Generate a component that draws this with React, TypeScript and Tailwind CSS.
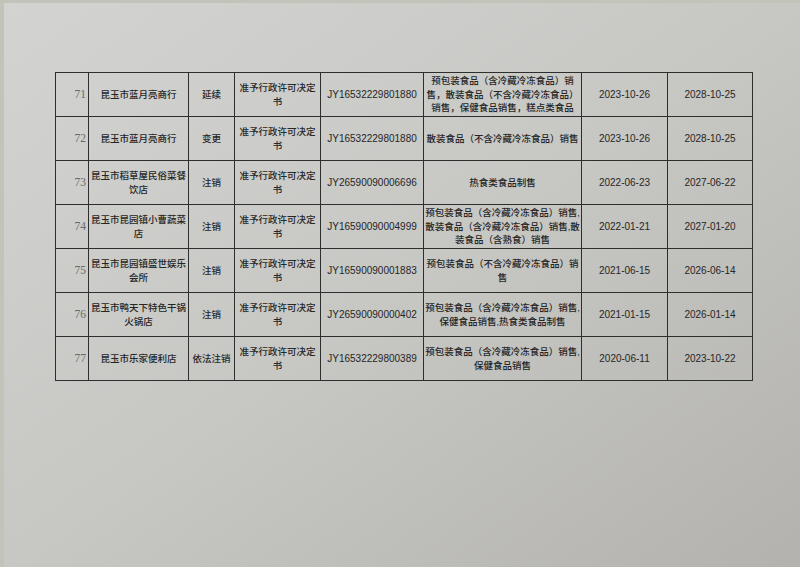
const rows = [
  {
    no: "71",
    name: ["昆玉市蓝月亮商行"],
    type: "延续",
    id: "JY16532229801880",
    scope: ["预包装食品（含冷藏冷冻食品）销", "售，散装食品（不含冷藏冷冻食品）", "销售，保健食品销售，糕点类食品"],
    from: "2023-10-26",
    to: "2028-10-25",
  },
  {
    no: "72",
    name: ["昆玉市蓝月亮商行"],
    type: "变更",
    id: "JY16532229801880",
    scope: ["散装食品（不含冷藏冷冻食品）销售"],
    from: "2023-10-26",
    to: "2028-10-25",
  },
  {
    no: "73",
    name: ["昆玉市稻草屋民俗菜餐", "饮店"],
    type: "注销",
    id: "JY26590090006696",
    scope: ["热食类食品制售"],
    from: "2022-06-23",
    to: "2027-06-22",
  },
  {
    no: "74",
    name: ["昆玉市昆园镇小曹蔬菜", "店"],
    type: "注销",
    id: "JY16590090004999",
    scope: ["预包装食品（含冷藏冷冻食品）销售,", "散装食品（含冷藏冷冻食品）销售,散", "装食品（含熟食）销售"],
    from: "2022-01-21",
    to: "2027-01-20",
  },
  {
    no: "75",
    name: ["昆玉市昆园镇盛世娱乐", "会所"],
    type: "注销",
    id: "JY16590090001883",
    scope: ["预包装食品（不含冷藏冷冻食品）销", "售"],
    from: "2021-06-15",
    to: "2026-06-14",
  },
  {
    no: "76",
    name: ["昆玉市鸭天下特色干锅", "火锅店"],
    type: "注销",
    id: "JY26590090000402",
    scope: ["预包装食品（含冷藏冷冻食品）销售,", "保健食品销售,热食类食品制售"],
    from: "2021-01-15",
    to: "2026-01-14",
  },
  {
    no: "77",
    name: ["昆玉市乐家便利店"],
    type: "依法注销",
    id: "JY16532229800389",
    scope: ["预包装食品（含冷藏冷冻食品）销售,", "保健食品销售"],
    from: "2020-06-11",
    to: "2023-10-22",
  },
]

const Lines = ({ lines }: { lines: string[] }) => (
  <>
    {lines.map((l, i) => (
      <div key={i} className="whitespace-nowrap">
        {l}
      </div>
    ))}
  </>
)

const cell = "border border-[#2e2e2e] p-0 text-center align-middle"

export default function App() {
  return (
    <div className="w-[800px] h-[567px] overflow-hidden bg-[#c3c3ba] pl-[4px] pt-[3px]">
      <div className="h-full w-full bg-linear-to-br from-[#d3d3d1] via-[#c7c7c4] to-[#b3b2af] pl-[51px] pt-[69px]">
        <table
          className="table-fixed border-collapse border-[1.5px] border-[#2a2a2a] text-[#262626] leading-[13.5px] font-medium"
          style={{ fontFamily: '"Liberation Sans", "Noto Sans CJK SC", sans-serif' }}
        >
          <colgroup>
            <col className="w-[33px]" />
            <col className="w-[100px]" />
            <col className="w-[46px]" />
            <col className="w-[86px]" />
            <col className="w-[103px]" />
            <col className="w-[158px]" />
            <col className="w-[86px]" />
            <col className="w-[85px]" />
          </colgroup>
          <tbody className="text-[9.5px]">
            {rows.map((r) => (
              <tr key={r.no} className="h-[44px]">
                <td className="border border-[#2e2e2e] p-0 pr-[2px] text-right align-middle font-['Liberation_Serif',serif] font-normal text-[11.5px] text-[#6a6a6a]">
                  {r.no}
                </td>
                <td className={cell}>
                  <Lines lines={r.name} />
                </td>
                <td className={cell}>{r.type}</td>
                <td className={cell}>
                  <div>准予行政许可决定</div>
                  <div>书</div>
                </td>
                <td className={`${cell} text-[10px] font-normal`}>{r.id}</td>
                <td className={cell}>
                  <Lines lines={r.scope} />
                </td>
                <td className={`${cell} text-[10px] font-normal`}>{r.from}</td>
                <td className={`${cell} text-[10px] font-normal`}>{r.to}</td>
              </tr>
            ))}
          </tbody>
        </table>
      </div>
    </div>
  )
}
